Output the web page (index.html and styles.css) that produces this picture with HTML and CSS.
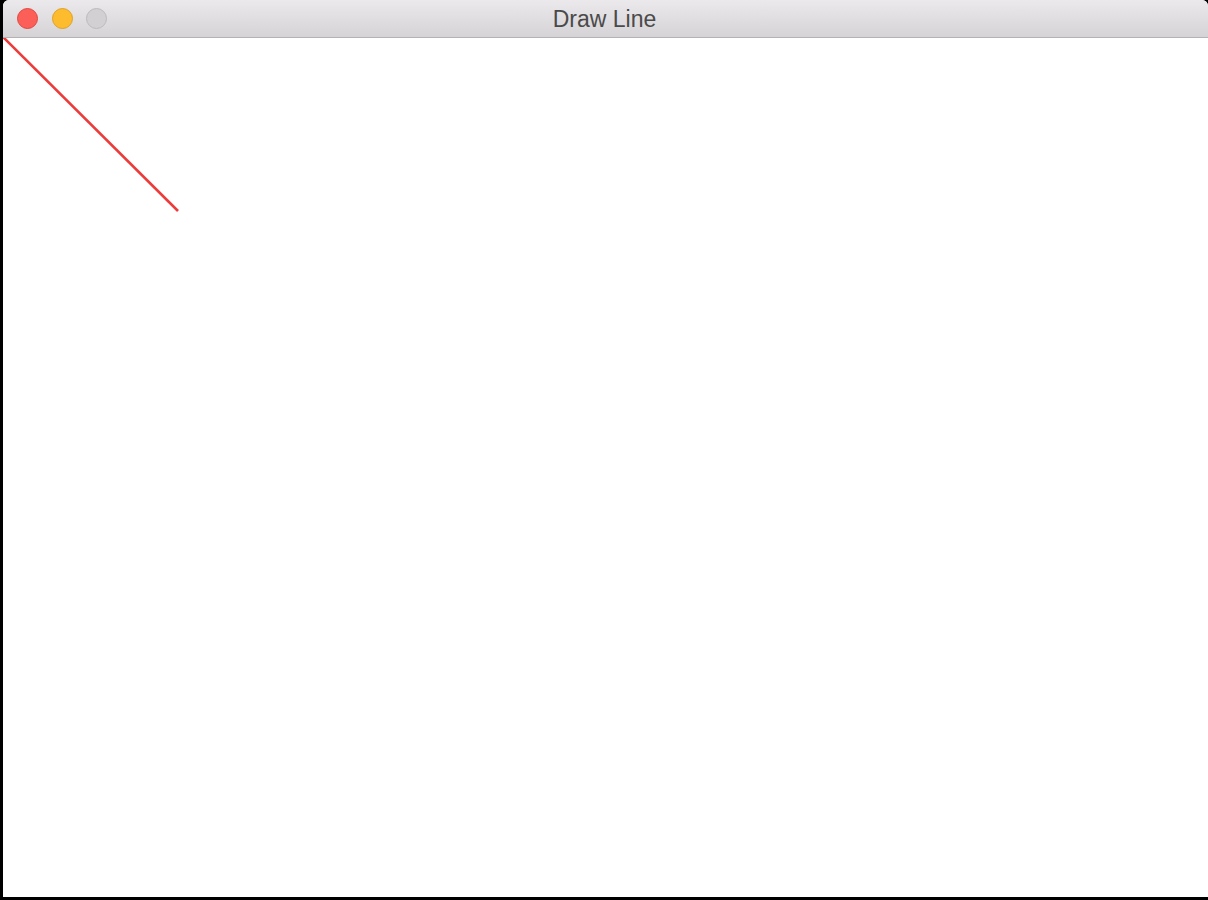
FILE: index.html
```html
<!DOCTYPE html>
<html>
<head>
<meta charset="utf-8">
<link rel="stylesheet" href="styles.css">
</head>
<body>
<div class="window">
  <div class="titlebar">
    <div class="lights">
      <span class="light close"></span>
      <span class="light min"></span>
      <span class="light zoom"></span>
    </div>
    <div class="title">Draw Line</div>
  </div>
  <div class="canvas">
    <svg class="drawing" width="1205" height="860" viewBox="0 0 1205 860">
      <line x1="0" y1="-1" x2="175" y2="173" stroke="#ec3b3b" stroke-width="2.6"/>
    </svg>
  </div>
</div>
</body>
</html>
```

FILE: styles.css
```css
html, body {
  margin: 0;
  padding: 0;
  background: #000;
  width: 1208px;
  height: 900px;
  overflow: hidden;
}
.window {
  margin-left: 3px;
  width: 1205px;
  height: 897px;
  border-radius: 6px 6px 0 0;
  overflow: hidden;
  background: #fff;
  display: flex;
  flex-direction: column;
}
.titlebar {
  height: 38px;
  flex: none;
  box-sizing: border-box;
  background: linear-gradient(#ebe9eb, #d5d3d5);
  border-bottom: 1px solid #b4b2b4;
  position: relative;
  display: flex;
  align-items: center;
  justify-content: center;
}
.lights {
  position: absolute;
  left: 14px;
  top: 8px;
  display: flex;
  gap: 13.5px;
}
.light {
  width: 21px;
  height: 21px;
  border-radius: 50%;
  box-sizing: border-box;
  display: block;
}
.close { background: #fc5f57; border: 1px solid #e14640; }
.min { background: #fdbc2e; border: 1px solid #dea123; }
.zoom { background: #d2d0d2; border: 1px solid #bcbabc; }
.title {
  font-family: "Liberation Sans", Arial, sans-serif;
  font-size: 23px;
  color: #4b4a4b;
  margin-right: 2px;
  margin-top: 1px;
}
.canvas {
  flex: 1;
  background: #fff;
}
.drawing {
  display: block;
}
```
